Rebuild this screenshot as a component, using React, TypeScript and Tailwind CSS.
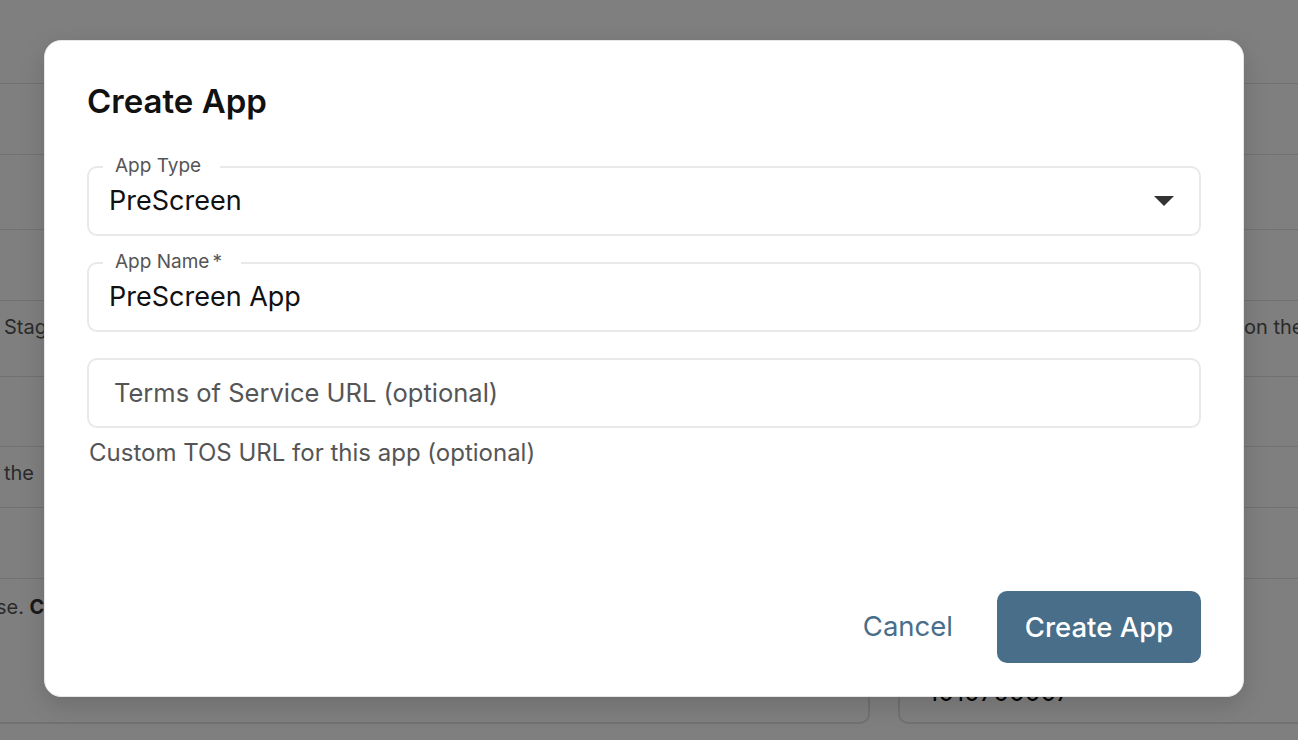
import React from 'react';

const rows = [
  { h: 'h-[84px]', left: '', right: '' },
  { h: 'h-[71px]', left: '', right: '' },
  { h: 'h-[75px]', left: '', right: '' },
  { h: 'h-[71px]', left: '', right: '' },
  { h: 'h-[76px]', left: 'Stage', right: 'on the' },
  { h: 'h-[70px]', left: '', right: '' },
  { h: 'h-[61px]', left: 'the', right: '' },
  { h: 'h-[71px]', left: '', right: '' },
];

const Field: React.FC<{ label?: string; required?: boolean; children: React.ReactNode }> = ({ label, required, children }) => (
  <div className="relative h-[70px] rounded-[10px] border-2 border-[#e9e9e9]">
    {label && (
      <span className="absolute left-[14px] top-[-12px] bg-white pl-[12px] pr-[19px] text-[19px] leading-[20px] text-[#555]">
        {label}
        {required && <span className="ml-[3px]">*</span>}
      </span>
    )}
    {children}
  </div>
);

export default function App() {
  return (
    <div className="relative h-[740px] w-full overflow-hidden bg-white font-['Inter',sans-serif]">
      {/* page behind the dialog */}
      <div className="flex flex-col">
        {rows.map((r, i) => (
          <div key={i} className={`${r.h} flex items-start justify-between border-b border-[#e2e2e2] pt-[11px] text-[20px] text-[#555]`}>
            <span className="pl-[4px]">{r.left}</span>
            <span className="w-[54px] whitespace-nowrap">{r.right}</span>
          </div>
        ))}
        <div className="h-[74px] pt-[13px] text-[20px] text-[#555]">
          <span className="ml-[-4px]">
            se. <b className="text-[#333]">C</b>
          </span>
        </div>
        <div className="flex h-[71px] gap-[28px]">
          <div className="-ml-[20px] w-[890px] rounded-b-[10px] border-2 border-t-0 border-[#e2e2e2]"></div>
          <div className="flex flex-1 items-end rounded-bl-[10px] border-2 border-t-0 border-r-0 border-[#e2e2e2] pb-[15px] pl-[28px] text-[25px] leading-[30px] text-black">
            1010700007
          </div>
        </div>
      </div>

      <div className="absolute inset-0 bg-black/50"></div>

      {/* dialog */}
      <div className="absolute left-[44px] top-[40px] flex h-[657px] w-[1200px] flex-col rounded-[17px] border border-[#e6e6e6] bg-white px-[42px] pb-[33px] pt-[40px] shadow-[0_8px_24px_rgba(0,0,0,0.15)]">
        <h2 className="text-[33px] font-semibold leading-[40px] text-[#111]">Create App</h2>

        <div className="mt-[45px] flex flex-col gap-[26px]">
          <Field label="App Type">
            <div className="flex h-full items-center justify-between pl-[20px] pr-[25px]">
              <span className="text-[27px] text-[#111]">PreScreen</span>
              <svg width="20" height="10" viewBox="0 0 20 10">
                <polygon points="0,0 20,0 10,10" fill="#333" />
              </svg>
            </div>
          </Field>
          <Field label="App Name" required>
            <div className="flex h-full items-center pl-[20px]">
              <span className="text-[27px] text-[#111]">PreScreen App</span>
            </div>
          </Field>
          <div>
            <Field>
              <div className="flex h-full items-center pl-[25px]">
                <span className="text-[25.5px] text-[#555]">Terms of Service URL (optional)</span>
              </div>
            </Field>
            <p className="mt-[9px] pl-[2px] text-[24px] leading-[32px] text-[#555]">Custom TOS URL for this app (optional)</p>
          </div>
        </div>

        <div className="mt-auto flex items-center justify-end gap-[32px]">
          <button className="px-[12px] py-[8px] text-[27.5px] text-[#486e8a]">Cancel</button>
          <button className="h-[72px] w-[204px] rounded-[10px] bg-[#486e8a] pt-[2px] text-[27.5px] font-medium text-white">Create App</button>
        </div>
      </div>
    </div>
  );
}
